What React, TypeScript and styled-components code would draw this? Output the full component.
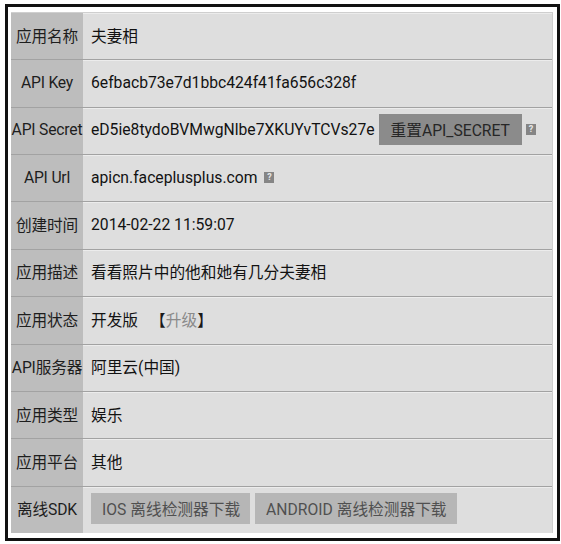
import React from "react";
import styled, { createGlobalStyle } from "styled-components";

const GlobalStyle = createGlobalStyle`
  html, body {
    margin: 0;
    padding: 0;
    background: #ffffff;
  }
  body {
    font-family: Roboto, "Noto Sans CJK SC", sans-serif;
  }
`;

const Frame = styled.div`
  margin: 4px 0 0 5px;
  width: 542px;
  border: 3px solid #111111;
  padding: 5px 4px 5px 3px;
  background: #ffffff;
`;

const Table = styled.div`
  display: flex;
  flex-direction: column;
  height: 521px;
  background: #dedede;
  border-top: 1px solid #cfcfcf;
  border-right: 1px solid #cfcfcf;
  box-sizing: border-box;
`;

const Row = styled.div<{ $first: boolean }>`
  flex: 1;
  display: flex;
  border-top: ${(p) => (p.$first ? "none" : "1px solid #a2a2a2")};
`;

const Label = styled.div`
  width: 72px;
  flex-shrink: 0;
  display: flex;
  align-items: center;
  justify-content: center;
  padding-bottom: 2px;
  background: #bdbdbd;
  color: #1e1e1e;
  font-size: 15.7px;
  white-space: nowrap;
  letter-spacing: -0.2px;
`;

const Value = styled.div`
  flex: 1;
  display: flex;
  align-items: center;
  gap: 4px;
  padding: 0 0 2px 8px;
  color: #121212;
  font-size: 15.7px;
  white-space: nowrap;
  box-shadow: inset 0 1px 0 #ececec;
`;

const DarkButton = styled.span`
  display: inline-flex;
  align-items: center;
  height: 31px;
  padding: 0 12px;
  background: #8b8b8b;
  color: #262626;
  font-size: 15.7px;
`;

const LightButton = styled.span`
  display: inline-flex;
  align-items: center;
  height: 31px;
  padding: 0 10px 0 11px;
  margin-right: 1px;
  background: #b6b6b6;
  color: #505050;
  font-size: 15.7px;
`;

const Help = styled.span<{ $offset: number }>`
  display: inline-flex;
  align-items: center;
  justify-content: center;
  width: 10px;
  height: 11px;
  margin-left: ${(p) => p.$offset}px;
  background: #858585;
  color: #e8e8e8;
  font-size: 9px;
  font-weight: bold;
  line-height: 1;
`;

const Upgrade = styled.span`
  margin-left: 8px;
  color: #1a1a1a;
`;

const UpgradeText = styled.span`
  color: #8a8a8a;
`;

interface Info {
  label: string;
  value: React.ReactNode;
}

const HelpIcon: React.FunctionComponent<{ offset?: number }> = ({ offset = 3 }) => (
  <Help $offset={offset}>?</Help>
);

const rows: Info[] = [
  { label: "应用名称", value: "夫妻相" },
  { label: "API Key", value: "6efbacb73e7d1bbc424f41fa656c328f" },
  {
    label: "API Secret",
    value: (
      <>
        eD5ie8tydoBVMwgNlbe7XKUYvTCVs27e
        <DarkButton>重置API_SECRET</DarkButton>
        <HelpIcon offset={0} />
      </>
    ),
  },
  {
    label: "API Url",
    value: (
      <>
        apicn.faceplusplus.com
        <HelpIcon />
      </>
    ),
  },
  { label: "创建时间", value: "2014-02-22 11:59:07" },
  { label: "应用描述", value: "看看照片中的他和她有几分夫妻相" },
  {
    label: "应用状态",
    value: (
      <>
        开发版
        <Upgrade>
          【<UpgradeText>升级</UpgradeText>】
        </Upgrade>
      </>
    ),
  },
  { label: "API服务器", value: "阿里云(中国)" },
  { label: "应用类型", value: "娱乐" },
  { label: "应用平台", value: "其他" },
  {
    label: "离线SDK",
    value: (
      <>
        <LightButton>IOS 离线检测器下载</LightButton>
        <LightButton>ANDROID 离线检测器下载</LightButton>
      </>
    ),
  },
];

const App: React.FunctionComponent = () => {
  return (
    <>
      <GlobalStyle />
      <Frame>
        <Table>
          {rows.map((row, i) => (
            <Row key={row.label} $first={i === 0}>
              <Label>{row.label}</Label>
              <Value>{row.value}</Value>
            </Row>
          ))}
        </Table>
      </Frame>
    </>
  );
};

export default App;
